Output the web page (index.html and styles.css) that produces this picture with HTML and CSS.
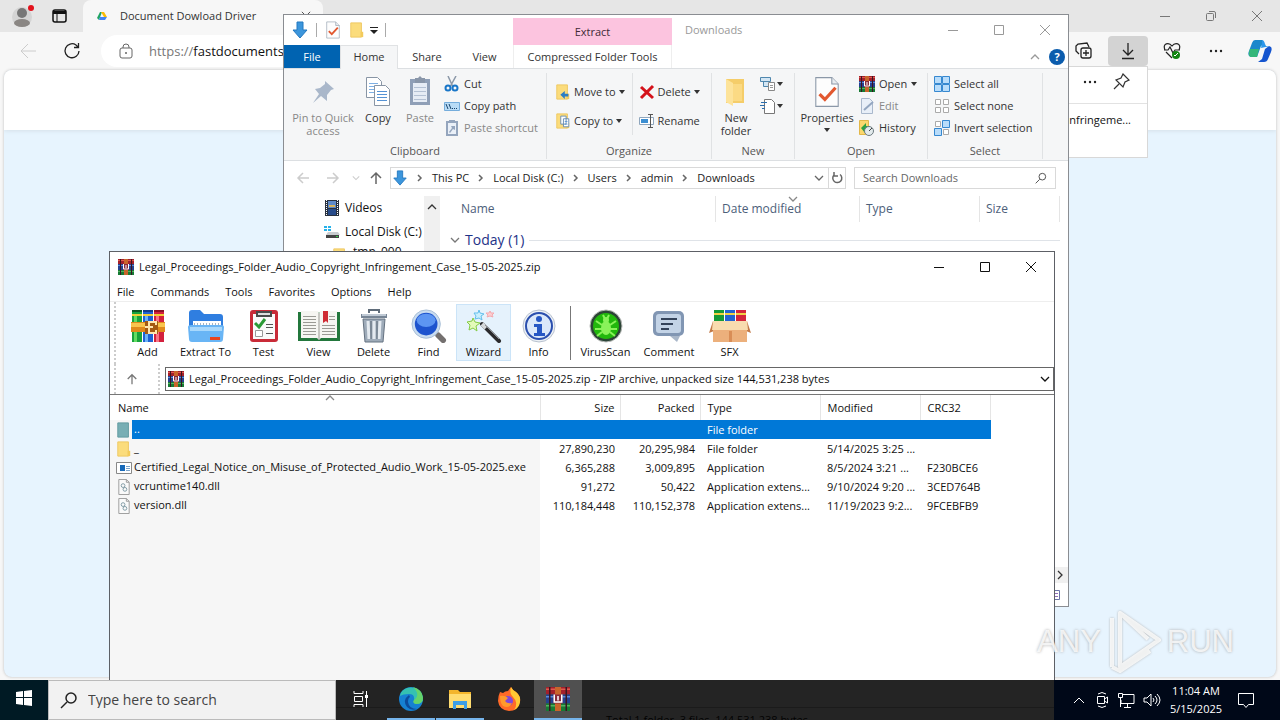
FILE: index.html
```html
<!DOCTYPE html>
<html lang="en">
<head>
    <meta charset="UTF-8">
    <meta name="viewport" content="width=device-width, initial-scale=1.0">
    <title>Desktop</title>
    <link rel="stylesheet" href="styles.css">
</head>
<body>
    <!-- Shared icons -->
    <svg class="sprite" xmlns="http://www.w3.org/2000/svg">
        <symbol id="rar" viewBox="0 0 16 16">
            <path fill="#a3202b" d="M0 0h16v5H0z"/><path fill="#e05a50" d="M0 1h16v1H0z"/>
            <path fill="#25408f" d="M0 5h16v6H0z"/><path fill="#5b8ad8" d="M0 6h16v1H0z"/>
            <path fill="#167a34" d="M0 11h16v5H0z"/><path fill="#55b060" d="M0 12h16v1H0z"/>
            <path fill="#3b1420" d="M2 0h1v5H2zM13 0h1v5h-1zM2 5h1v6H2zM13 5h1v6h-1zM2 11h1v5H2zM13 11h1v5h-1z"/>
            <path fill="#c9652b" d="M6 0h4v16H6z"/>
            <path fill="#8a2a3c" d="M5 5h6v6H5z"/><path fill="none" stroke="#fff" d="M5.500 5v5h5V5M8 6v3"/>
        </symbol>
        <symbol id="books" viewBox="0 0 34 34">
            <path fill="#18a33c" d="M1 2h10v31H1z"/><path fill="#63dc62" d="M3 5h3v28H3z"/>
            <path fill="#1c62d4" d="M12 2h10v31H12z"/><path fill="#6bb2f6" d="M14 5h3v28h-3z"/>
            <path fill="#d3203d" d="M23 2h10v31H23z"/><path fill="#f77485" d="M25 5h3v28h-3z"/>
            <path fill="#f2cf35" d="M1 5h10v2H1zM12 5h10v2H12zM23 5h10v2H23z"/>
            <path fill="#0d5524" d="M1 1h10v2H1z"/><path fill="#123c8c" d="M12 1h10v2H12z"/><path fill="#8e1226" d="M23 1h10v2H23z"/>
            <path fill="#e08a1c" d="M0 13h34v10H0z"/><path fill="#f9c54e" d="M0 14h34v4H0z"/>
            <path fill="#a45a12" d="M14 12h13v13H14z"/><path fill="none" stroke="#ffe7ae" stroke-width="2" d="M25 16v-3h-7v11h7v-3M14 18h8"/>
        </symbol>
        <symbol id="downarrow" viewBox="0 0 16 18">
            <path fill="#3c96dc" stroke="#2378c0" d="M5 1h6v8h4l-7 8-7-8h4z"/>
        </symbol>
        <symbol id="folder" viewBox="0 0 16 18">
            <path fill="#fbdc7c" stroke="#edc65c" d="M1 1h12v16H1z"/><path fill="#f3cb5c" d="M12 11h3v6h-3z"/>
        </symbol>
        <symbol id="doccheck" viewBox="0 0 24 30">
            <path fill="#fdfdfd" stroke="#8b98a8" d="M1.500 1.500h15l6 6v21h-21z"/><path fill="#e8ecf0" stroke="#8b98a8" d="M16.500 1.500v6h6"/>
            <path fill="none" stroke="#e2582f" stroke-width="3" d="M5 17l5 5 10-11"/>
        </symbol>
        <symbol id="dll" viewBox="0 0 14 17">
            <path fill="#fafafa" stroke="#9a9a9a" d="M1.500.5h8l3 3v13h-11z"/><path fill="none" stroke="#9a9a9a" d="M9.500.5v3h3"/>
            <circle cx="6" cy="7" r="2" fill="none" stroke="#7f9aa4"/><circle cx="8" cy="11" r="2" fill="none" stroke="#7f9aa4"/>
        </symbol>
        <symbol id="close" viewBox="0 0 12 12"><path fill="none" stroke="currentColor" d="M1 1l10 10M11 1L1 11"/></symbol>
        <symbol id="max" viewBox="0 0 12 12"><path fill="none" stroke="currentColor" d="M1.500 1.500h9v9h-9z"/></symbol>
        <symbol id="min" viewBox="0 0 12 12"><path fill="none" stroke="currentColor" d="M1 6.500h10"/></symbol>
        <symbol id="up" viewBox="0 0 12 14"><path fill="none" stroke="currentColor" stroke-width="1.500" d="M6 13V2M1 7l5-5 5 5"/></symbol>
        <symbol id="chev" viewBox="0 0 10 10"><path fill="none" stroke="currentColor" stroke-width="1.300" d="M1 3l4 4 4-4"/></symbol>
        <symbol id="chevr" viewBox="0 0 6 8"><path fill="none" stroke="currentColor" stroke-width="1.500" d="M1 1l3 3-3 3"/></symbol>
        <symbol id="drop" viewBox="0 0 6 4"><path fill="currentColor" d="M0 0h6L3 4z"/></symbol>
        <symbol id="lens" viewBox="0 0 18 18"><circle cx="11" cy="7" r="5" fill="none" stroke="currentColor" stroke-width="1.500"/><path stroke="currentColor" stroke-width="1.500" d="M7 11l-6 6"/></symbol>
    </svg>

    <!-- Browser -->
    <section class="browser">
        <header class="tabstrip">
            <svg class="avatar" viewBox="0 0 24 24"><circle cx="10" cy="13" r="10" fill="#d4d4d4"/><circle cx="10" cy="9" r="5" fill="#777"/><ellipse cx="10" cy="19" rx="8" ry="4" fill="#8a8683"/><circle cx="19" cy="4" r="3" fill="#e3121c"/></svg>
            <svg class="workspace" viewBox="0 0 16 16"><rect x="1" y="2" width="13" height="12" rx="2" fill="none" stroke="#111" stroke-width="1.500"/><path fill="#111" d="M1 3h13v3H1z"/><path stroke="#111" d="M5 5v9"/></svg>
            <div class="tab">
                <svg class="icon10" viewBox="0 0 10 10"><path fill="#1fa463" d="M3 1h2L2 9 0 7z"/><path fill="#fbbc04" d="M4 1h3l3 5H7z"/><path fill="#4285f4" d="M3 6h7L8 9H2z"/></svg>
                <span>Document Dowload Driver</span>
                <button class="tabclose" aria-label="Close tab"><svg class="icon10"><use href="#close"/></svg></button>
            </div>
            <div class="controls">
                <button aria-label="Minimize"><svg class="icon12"><use href="#min"/></svg></button>
                <button aria-label="Restore"><svg class="icon12" viewBox="0 0 12 12"><rect x="1.500" y="3.500" width="7" height="7" rx="1" fill="none" stroke="#777"/><path fill="none" stroke="#777" d="M4 1.500h5q1.500 0 1.500 1.500v5"/></svg></button>
                <button aria-label="Close"><svg class="icon12"><use href="#close"/></svg></button>
            </div>
        </header>
        <div class="navbar">
            <button class="back" aria-label="Back"><svg viewBox="0 0 16 16"><path fill="none" stroke="#ccc" d="M16 8H1M8 1L1 8l7 7"/></svg></button>
            <button class="reload" aria-label="Refresh"><svg viewBox="0 0 18 18"><path fill="none" stroke="#222" stroke-width="1.300" d="M16 9a7 7 0 1 1-3-6l2 2M15.500 1v4.500H11"/></svg></button>
            <div class="omnibox">
                <svg viewBox="0 0 14 16"><rect x="1" y="5" width="12" height="10" rx="2" fill="none" stroke="#666"/><path fill="none" stroke="#666" d="M4 5V4a3 3 0 0 1 6 0v1"/><circle cx="7" cy="10" r="1" fill="#666"/></svg>
                <label for="url">https://</label>
                <input type="text" id="url" value="fastdocuments">
            </div>
            <div class="tools">
                <button aria-label="Collections"><svg viewBox="0 0 18 18"><path fill="none" stroke="#222" stroke-width="1.300" d="M4 12L1 9V4l2-2 9-1 2 4"/><rect x="6" y="6" width="10" height="10" rx="2" fill="#f7f7f7" stroke="#222" stroke-width="1.300"/><path stroke="#222" stroke-width="1.300" d="M11 8v6M8 11h6"/></svg></button>
                <button class="active" aria-label="Downloads"><svg viewBox="0 0 18 18"><path fill="none" stroke="#222" stroke-width="1.300" d="M9 1v12M4 8l5 5 5-5M3 16.500h12"/></svg></button>
                <button aria-label="Browser essentials"><svg viewBox="0 0 18 18"><path fill="none" stroke="#222" stroke-width="1.200" d="M2 8C-1 1 6 0 9 4c3-4 10-3 7 4M1 8h4l2-3 3 6 2-3h5M3 10l6 6"/><circle cx="13" cy="13" r="4" fill="#128512"/><path fill="none" stroke="#fff" d="M11 13l1 1 3-3"/></svg></button>
                <button aria-label="Settings"><svg viewBox="0 0 18 18"><circle cx="4" cy="9" r="1.200" fill="#222"/><circle cx="9" cy="9" r="1.200" fill="#222"/><circle cx="14" cy="9" r="1.200" fill="#222"/></svg></button>
                <button class="copilot" aria-label="Copilot"><svg viewBox="0 0 24 24"><path fill="#1b88cc" d="M7 1h7l2 4-3 2-4 11H3Q-1 17 1 12l3-8q1-3 3-3z"/><path fill="#35b779" d="M2 10h9L9 18H4q-5 0-2-8z"/><path fill="#1555cf" d="M10 23l4-3 3-10 4-3q4 1 2 6l-3 7q-1 3-4 3z"/><path fill="#2a96ea" d="M14 1q2 0 3 4l1 2h4L13 9l1-5z"/></svg></button>
            </div>
        </div>
        <div class="webpage"><div class="banner"></div></div>
        <div class="downloads">
            <div class="downloads-head">
                <button aria-label="More options"><svg viewBox="0 0 18 18"><circle cx="4" cy="9" r="1.200" fill="#222"/><circle cx="9" cy="9" r="1.200" fill="#222"/><circle cx="14" cy="9" r="1.200" fill="#222"/></svg></button>
                <button aria-label="Pin"><svg viewBox="0 0 18 18"><path fill="none" stroke="#333" stroke-width="1.200" d="M10 1l6 6-4 2-2 5-7-7 5-2zM6 11l-5 5"/></svg></button>
            </div>
            <p>Infringeme...</p>
        </div>
    </section>

    <!-- File Explorer -->
    <section class="window explorer">
        <header class="explorer-title">
            <div class="quick">
                <svg class="icon18"><use href="#downarrow"/></svg>
                <i></i>
                <svg class="icon18"><use href="#doccheck"/></svg>
                <svg class="icon16"><use href="#folder"/></svg>
                <svg class="icon8" viewBox="0 0 8 8"><path fill="#222" d="M0 1h8v1H0zM0 4h8L4 8z"/></svg>
                <i></i>
            </div>
            <div class="extract">Extract</div>
            <span class="caption">Downloads</span>
            <div class="controls">
                <button aria-label="Minimize"><svg class="icon12"><use href="#min"/></svg></button>
                <button aria-label="Maximize"><svg class="icon12"><use href="#max"/></svg></button>
                <button aria-label="Close"><svg class="icon12"><use href="#close"/></svg></button>
            </div>
        </header>
        <nav class="ribbon-tabs">
            <button class="file">File</button>
            <button class="home">Home</button>
            <button>Share</button>
            <button class="view">View</button>
            <button class="context">Compressed Folder Tools</button>
            <svg class="icon10 collapse"><use href="#chev"/></svg>
            <button class="help" aria-label="Help">?</button>
        </nav>
        <div class="ribbon">
            <div class="group clipboard">
                <div class="group-body">
                    <button class="big dim pin"><svg viewBox="0 0 32 32"><path fill="#a9b7ca" d="M18 5l9 8-3 1-4 5v6l-6-5-8 7 6-9-4-5 5-1 5-4z"/></svg>Pin to Quick access</button>
                    <button class="big copy"><svg viewBox="0 0 32 32"><path fill="#fff" stroke="#8895a5" d="M4.500 1.500h11l4 4v16h-15z"/><path stroke="#7eb0e4" d="M7 7.500h9M7 10.500h9M7 13.500h9M7 16.500h9"/><path fill="#fff" stroke="#8895a5" d="M12.500 9.500h11l4 4v16h-15z"/><path stroke="#5592d4" d="M15 15.500h10M15 18.500h10M15 21.500h10M15 24.500h10"/></svg>Copy</button>
                    <button class="big dim paste"><svg viewBox="0 0 32 32"><path fill="#8f9fb7" d="M6 3h20v26H6z"/><path fill="#e6ecf5" d="M9 7h14v19H9z"/><path fill="#8996a9" d="M11 2h3l2-2 2 2h3v5H11z"/><path stroke="#b4c1d4" d="M10 11.500h12M10 15.500h12M10 19.500h12M10 23.500h12"/></svg>Paste</button>
                    <div class="stack">
                        <button><svg viewBox="0 0 16 16"><path stroke="#8b98a8" stroke-width="1.500" d="M4 0l5 11M12 0L6 11"/><circle cx="4" cy="12" r="2.500" fill="none" stroke="#1976c8" stroke-width="2"/><circle cx="11" cy="12" r="2.500" fill="none" stroke="#1976c8" stroke-width="2"/></svg>Cut</button>
                        <button><svg viewBox="0 0 16 16"><path fill="#b9dcf6" stroke="#75addc" d="M.5 4.500h15v8H.5z"/><path fill="none" stroke="#17446e" d="M2 6l2 5M5 6l2 5M8 10.500h1M10 10.500h1M12 10.500h1"/></svg>Copy path</button>
                        <button class="dim"><svg viewBox="0 0 16 16"><path fill="#eaf0f8" stroke="#94a5bd" stroke-width="2" d="M3 2h10v13H3z"/><path fill="#94a5bd" d="M5 0h6v3H5zM7 6h4v4L9 9l-3 4-1-1 3-4z"/></svg>Paste shortcut</button>
                    </div>
                </div>
                <h2>Clipboard</h2>
            </div>
            <div class="group organize">
                <div class="group-body">
                    <div class="stack wide">
                        <button><svg viewBox="0 0 16 18"><use href="#folder"/><path fill="#2c7dc5" d="M5 12l5-4v3h4v3h-4v3z"/></svg>Move to<svg class="drop"><use href="#drop"/></svg></button>
                        <button><svg viewBox="0 0 16 18"><use href="#folder"/><path fill="#fff" stroke="#6288b0" d="M5.500 3.500h6v9h-6zM8.500 6.500h6v9h-6z"/><path stroke="#5592d4" d="M10 9.500h3M10 12.500h3"/></svg>Copy to<svg class="drop"><use href="#drop"/></svg></button>
                    </div>
                    <div class="stack wide second">
                        <button><svg viewBox="0 0 16 16"><path stroke="#d4121a" stroke-width="3" d="M2 3l12 11M14 2L2 14"/></svg>Delete<svg class="drop"><use href="#drop"/></svg></button>
                        <button><svg viewBox="0 0 16 16"><path fill="#fff" stroke="#8fa6bd" d="M.5 4.500h14v7H.5z"/><path fill="#3d8fd2" d="M2 6h7v4H2z"/><path fill="none" stroke="#555" d="M9 1.500h5M9 14.500h5M11.500 1v14"/></svg>Rename</button>
                    </div>
                </div>
                <h2>Organize</h2>
            </div>
            <div class="group new">
                <div class="group-body">
                    <button class="big newfolder"><svg viewBox="0 0 32 32"><path fill="#f5cd69" d="M6 3h18v24H6z"/><path fill="#fde39a" d="M6 3l7 4v23l-7-4z"/><path fill="#fbda84" d="M13 8h9v17h-9z"/></svg>New folder</button>
                    <div class="stack">
                        <button aria-label="New item"><svg viewBox="0 0 16 16"><path fill="#d3e6f4" stroke="#4f87ae" d="M.5 1.500h10v4H.5zM3.500 5.500h6v5h-6z"/><path fill="#fff" stroke="#888" d="M8.500 6.500h6v8h-6z"/><path stroke="#999" d="M10 9.500h3M10 11.500h3"/></svg><svg class="drop"><use href="#drop"/></svg></button>
                        <button aria-label="Easy access"><svg viewBox="0 0 16 16"><path fill="#fff" stroke="#777" d="M4.500 1.500h7l3 3v11h-10z"/><path stroke="#2c6fae" d="M1 4.500h6M0 7.500h5M2 10.500h3"/></svg><svg class="drop"><use href="#drop"/></svg></button>
                    </div>
                </div>
                <h2>New</h2>
            </div>
            <div class="group open">
                <div class="group-body">
                    <button class="big props"><svg><use href="#doccheck"/></svg>Properties<svg class="drop"><use href="#drop"/></svg></button>
                    <div class="stack">
                        <button><svg><use href="#rar"/></svg>Open<svg class="drop"><use href="#drop"/></svg></button>
                        <button class="dim"><svg viewBox="0 0 16 16"><path fill="#e8eff8" stroke="#a9b8cc" d="M2.500.5h8l3 3v12h-11z"/><path stroke="#93a6c0" stroke-width="2" d="M5 12l9-8"/></svg>Edit</button>
                        <button><svg viewBox="0 0 16 16"><path fill="#fbd76d" stroke="#e2b748" d="M.5.5h9v14h-9z"/><path fill="#2ea043" d="M2 8l5-5v3h4v4H6v3z"/><circle cx="10" cy="11" r="4.500" fill="#e2eaec" stroke="#6d7b80"/><path fill="none" stroke="#444" d="M10 11l3-3"/></svg>History</button>
                    </div>
                </div>
                <h2>Open</h2>
            </div>
            <div class="group select">
                <div class="group-body">
                    <div class="stack">
                        <button><svg viewBox="0 0 16 16"><path fill="#b8dcfa" stroke="#3688d0" d="M.5.5h7v7h-7zM8.500.5h7v7h-7zM.5 8.500h7v7h-7zM8.500 8.500h7v7h-7z"/></svg>Select all</button>
                        <button><svg viewBox="0 0 16 16"><path fill="#fff" stroke="#aaa" d="M1.500 1.500h5v5h-5zM9.500 1.500h5v5h-5zM1.500 9.500h5v5h-5zM9.500 9.500h5v5h-5z"/></svg>Select none</button>
                        <button><svg viewBox="0 0 16 16"><path fill="#fff" stroke="#aaa" d="M1.500 1.500h5v5h-5zM9.500 9.500h5v5h-5z"/><path fill="#b8dcfa" stroke="#3688d0" d="M8.500.5h7v7h-7zM.5 8.500h7v7h-7z"/></svg>Invert selection</button>
                    </div>
                </div>
                <h2>Select</h2>
            </div>
        </div>
        <div class="pathrow">
            <div class="arrows">
                <svg class="icon14 faint" viewBox="0 0 14 14"><path fill="none" stroke="currentColor" stroke-width="1.500" d="M13 7H2M7 2L2 7l5 5"/></svg>
                <svg class="icon14 faint" viewBox="0 0 14 14"><path fill="none" stroke="currentColor" stroke-width="1.500" d="M1 7h11M7 2l5 5-5 5"/></svg>
                <svg class="icon8 faint"><use href="#chev"/></svg>
                <svg class="icon14"><use href="#up"/></svg>
            </div>
            <div class="crumbs">
                <svg class="icon16"><use href="#downarrow"/></svg>
                <svg class="sep"><use href="#chevr"/></svg><a href="#">This PC</a>
                <svg class="sep"><use href="#chevr"/></svg><a href="#">Local Disk (C:)</a>
                <svg class="sep"><use href="#chevr"/></svg><a href="#">Users</a>
                <svg class="sep"><use href="#chevr"/></svg><a href="#">admin</a>
                <svg class="sep"><use href="#chevr"/></svg><a href="#">Downloads</a>
                <svg class="icon10 history"><use href="#chev"/></svg>
                <button aria-label="Refresh"><svg class="icon12" viewBox="0 0 12 12"><path fill="none" stroke="#666" stroke-width="1.500" d="M9 2.500A4.500 4.500 0 1 1 3 3M3 0v4h4"/></svg></button>
            </div>
            <div class="search">
                <input type="text" aria-label="Search Downloads" placeholder="Search Downloads">
                <svg class="icon12"><use href="#lens"/></svg>
            </div>
        </div>
        <div class="explorer-body">
            <ul class="tree">
                <li><svg class="icon16" viewBox="0 0 16 16"><path fill="#29313f" d="M1 0h14v16H1z"/><path fill="#5f8ac8" d="M4 1h8v7H4z"/><path fill="#274b8a" d="M4 9h8v6H4z"/><path fill="#d9b45c" d="M5 5h6v2H5z"/><path stroke="#fff" stroke-dasharray="1 1" d="M2.500 0v16M13.500 0v16"/></svg>Videos</li>
                <li><svg class="icon16" viewBox="0 0 16 16"><path fill="#27b2ea" d="M0 2h3v2H0zM4 2h3v2H4zM0 5h3v2H0zM4 5h3v2H4z"/><path fill="#c9cdd0" d="M4 8h10l2 3H2z"/><path fill="#444" d="M2 11h13v3H2z"/><path fill="#35d04b" d="M12 12h2v1h-2z"/></svg>Local Disk (C:)</li>
                <li class="sub"><svg class="icon16"><use href="#folder"/></svg>tmp_000</li>
            </ul>
            <div class="vscroll"><svg class="icon10"><use href="#chev"/></svg></div>
            <div class="files">
                <div class="cols"><span>Name</span><span class="sorted">Date modified<svg class="icon10 sortmark"><use href="#chev"/></svg></span><span>Type</span><span>Size</span></div>
                <div class="today"><svg class="icon10"><use href="#chev"/></svg>Today (1)<hr></div>
            </div>
        </div>
        <div class="hscroll"><svg class="icon10"><use href="#chev"/></svg></div>
        <footer class="explorer-foot"><svg class="icon10" viewBox="0 0 10 10"><path fill="#fff" stroke="#6a74a8" d="M.5.5h9v9h-9z"/><path stroke="#9270b8" d="M2 3.500h6M2 6.500h6"/></svg></footer>
    </section>

    <!-- WinRAR -->
    <section class="window rar">
        <header class="rar-title">
            <svg class="icon16"><use href="#rar"/></svg>
            <span>Legal_Proceedings_Folder_Audio_Copyright_Infringement_Case_15-05-2025.zip</span>
            <div class="controls">
                <button aria-label="Minimize"><svg class="icon12"><use href="#min"/></svg></button>
                <button aria-label="Maximize"><svg class="icon12"><use href="#max"/></svg></button>
                <button aria-label="Close"><svg class="icon12"><use href="#close"/></svg></button>
            </div>
        </header>
        <nav class="menu">
            <button>File</button><button>Commands</button><button>Tools</button><button>Favorites</button><button>Options</button><button>Help</button>
        </nav>
        <div class="toolbar">
            <button><svg><use href="#books"/></svg>Add</button>
            <button class="w60"><svg viewBox="0 0 36 34"><path fill="#2f7ee0" d="M1 4q0-3 3-3h8l4 4h16q3 0 3 3v20H1z"/><path fill="#fff" d="M5 12h28v8H5z"/><path stroke="#a4b4c4" stroke-dasharray="1 2" stroke-width="2" d="M6 15h26"/><path fill="#69b5f5" d="M0 18q0-2 3-2h30q3 0 3 2l-1 12q0 3-3 3H4q-3 0-3-3z"/><path fill="#a8d8fc" d="M2 18h32v4H2z"/><path fill="#e8441e" d="M22 28h10v3H22z"/></svg>Extract To</button>
            <button><svg viewBox="0 0 30 34"><rect x="1" y="1" width="28" height="32" rx="3" fill="#c92b38"/><path fill="#fafafa" d="M4 5h22v25H4z"/><path fill="#ddd" stroke="#4a4a4a" stroke-width="2" d="M8 3h14v4H8z"/><path fill="none" stroke="#2c9a36" stroke-width="3" d="M6 14l4 4 6-8"/><path fill="#fff" stroke="#999" d="M6.500 21.500h7v6h-7z"/><path stroke="#555" d="M17 15.500h7M17 18.500h7M17 24.500h7"/></svg>Test</button>
            <button><svg class="book" viewBox="0 0 42 34"><path fill="#23773c" d="M0 3h42v29H0z"/><path fill="#f6f6f2" d="M3 2h17l1 2 1-2h17v27H23l-2 2-2-2H3z"/><path stroke="#9a9a94" d="M21 4v27M5 7.500h13M5 10.500h13M5 13.500h13M5 16.500h13M5 19.500h13M5 22.500h13M5 25.500h13M24 16.500h13M24 19.500h13M24 22.500h13M24 25.500h13M31 7.500h6M31 10.500h6"/><path fill="#cf2c34" d="M25 2h5v12l-2-2-3 2z"/></svg>View</button>
            <button><svg viewBox="0 0 30 34"><path fill="#778595" d="M2 5h26v4H2z"/><path fill="#c0cad5" d="M3 5h24v2H3z"/><path fill="none" stroke="#5f6c7a" stroke-width="2" d="M10 4V1h10v3"/><path fill="#9eabb9" stroke="#657281" d="M4 10h22l-2 23H6z"/><path stroke="#e4eaf0" stroke-width="3" d="M9 12l1 18M15 12v18M21 12l-1 18"/><path stroke="#586674" d="M12 12v18M18 12v18"/></svg>Delete</button>
            <button><svg viewBox="0 0 38 36"><path stroke="#b9bfc5" stroke-width="6" d="M25 24l4 4"/><path stroke="#74706f" stroke-width="6" stroke-linecap="round" d="M29 28l5 5"/><circle cx="16" cy="16" r="15" fill="#c9dcf0" stroke="#a6bcd4"/><circle cx="16" cy="16" r="12" fill="#1d53ce"/><ellipse cx="16" cy="12" rx="10" ry="7" fill="#5c95f2"/></svg>Find</button>
            <button class="hover"><svg viewBox="0 0 36 34"><path stroke="#2a2a2c" stroke-width="4" stroke-linecap="round" d="M16 15l17 17"/><path stroke="#d5d8da" stroke-width="4" d="M16 15l4 4"/><path stroke="#8c8f93" d="M19 16l14 14"/><path fill="#e3fab9" stroke="#84cc46" d="M7 9l2 4 5 1-4 3 1 5-4-3-4 2 1-5-3-3 5-1z"/><path fill="#c9effd" stroke="#64bfec" d="M13 1l1 3 4 1-3 2 1 4-3-2-4 1 1-3-2-3h4z"/><path fill="#fbcdd0" stroke="#f4a9ae" d="M24 2l1 2h3l-2 2 1 2-3-1-3 1 1-2-2-2h3z"/></svg>Wizard</button>
            <button><svg viewBox="0 0 34 34"><circle cx="17" cy="17" r="16" fill="#edf1f6" stroke="#b9c2cf"/><circle cx="17" cy="17" r="13" fill="#dbe8fa" stroke="#2b4fae" stroke-width="2"/><circle cx="17" cy="10" r="3" fill="#2657c4"/><path fill="#2657c4" d="M12 15h8v9h3v3H12v-3h3v-6h-3z"/></svg>Info</button>
            <i></i>
            <button class="w60"><svg viewBox="0 0 34 34"><circle cx="17" cy="17" r="16" fill="#2c4436" stroke="#b8bab8"/><circle cx="17" cy="17" r="13" fill="#22b80d"/><ellipse cx="17" cy="19" rx="5" ry="7" fill="#8af35a"/><circle cx="17" cy="11" r="3" fill="#8af35a"/><path fill="none" stroke="#8af35a" stroke-width="2" d="M7 12l6 4M27 12l-6 4M6 20h22M8 27l5-4M26 27l-5-4M14 6l2 4M20 6l-2 4"/></svg>VirusScan</button>
            <button class="w66"><svg viewBox="0 0 34 34"><rect x="1" y="2" width="31" height="25" rx="5" fill="#8196b3"/><rect x="4" y="5" width="25" height="19" rx="3" fill="#c3d3e6"/><path fill="#a9b7c9" d="M18 27h10l-3 6z"/><path stroke="#34435a" stroke-width="2" d="M9 10h16M9 15h12M9 20h8"/></svg>Comment</button>
            <button><svg class="book" viewBox="0 0 42 34"><path fill="#159a36" d="M5 1h10v14H5z"/><path fill="#2264d2" d="M16 1h10v14H16z"/><path fill="#d5263b" d="M27 1h10v14H27z"/><path fill="#f0d144" d="M5 4h10v2H5zM16 4h10v2H16zM27 4h10v2H27z"/><path fill="#c27a48" d="M4 12L0 24l5-2zM38 12l4 12-5-2z"/><path fill="#ecb07c" d="M4 12h34v21H4z"/><path fill="#f8dcaf" d="M4 12h34l1 9H3z"/><path fill="#d98d56" d="M20 22h3v11h-3z"/></svg>SFX</button>
        </div>
        <div class="rar-path">
            <button class="upbtn" aria-label="Up one level"><svg class="icon12"><use href="#up"/></svg></button>
            <div class="rar-address">
                <svg class="icon16"><use href="#rar"/></svg>
                <input type="text" aria-label="Archive path" value="Legal_Proceedings_Folder_Audio_Copyright_Infringement_Case_15-05-2025.zip - ZIP archive, unpacked size 144,531,238 bytes">
                <svg class="icon10"><use href="#chev"/></svg>
            </div>
        </div>
        <div class="list">
            <table>
                <thead>
                    <tr><th class="name">Name<svg class="icon10 sortmark"><use href="#chev"/></svg></th><th class="num">Size</th><th class="num">Packed</th><th class="type">Type</th><th class="date">Modified</th><th class="crc">CRC32</th></tr>
                </thead>
                <tbody>
                    <tr class="selected"><td><svg class="icon16" viewBox="0 0 16 18"><path fill="#78aeb4" stroke="#5d979d" d="M1 1h12v16H1z"/></svg>..</td><td></td><td></td><td>File folder</td><td></td><td></td></tr>
                    <tr><td><svg class="icon16"><use href="#folder"/></svg>_</td><td class="num">27,890,230</td><td class="num">20,295,984</td><td>File folder</td><td>5/14/2025 3:25 ...</td><td></td></tr>
                    <tr><td><svg class="icon16" viewBox="0 0 16 16"><path fill="#fff" stroke="#888" d="M.5 2.500h15v11H.5z"/><path fill="#1668b8" d="M4 5h5v6H4z"/><path stroke="#7aa4cc" d="M10 6.500h4M10 8.500h4M10 10.500h4"/></svg>Certified_Legal_Notice_on_Misuse_of_Protected_Audio_Work_15-05-2025.exe</td><td class="num">6,365,288</td><td class="num">3,009,895</td><td>Application</td><td>8/5/2024 3:21 ...</td><td>F230BCE6</td></tr>
                    <tr><td><svg class="icon16"><use href="#dll"/></svg>vcruntime140.dll</td><td class="num">91,272</td><td class="num">50,422</td><td>Application extens...</td><td>9/10/2024 9:20 ...</td><td>3CED764B</td></tr>
                    <tr><td><svg class="icon16"><use href="#dll"/></svg>version.dll</td><td class="num">110,184,448</td><td class="num">110,152,378</td><td>Application extens...</td><td>11/19/2023 9:2...</td><td>9FCEBFB9</td></tr>
                </tbody>
            </table>
        </div>
        <footer class="rar-status">Total 1 folder, 3 files, 144,531,238 bytes</footer>
    </section>

    <!-- Watermark -->
    <div class="watermark">
        <span>ANY</span>
        <svg viewBox="0 0 56 64"><path d="M14 3v54l39-27zM6 8v49M14 3l28 26M6 57l8 4 30-20"/></svg>
        <span>RUN</span>
    </div>

    <!-- Taskbar -->
    <footer class="taskbar">
        <button class="start" aria-label="Start"><svg class="icon16" viewBox="0 0 16 16"><path fill="#fff" d="M0 2l7-1v6H0zM8 1l8-1v7H8zM0 8h7v7l-7-1zM8 8h8v8l-8-1z"/></svg></button>
        <div class="tasksearch">
            <svg class="icon18"><use href="#lens"/></svg>
            <input type="text" aria-label="Search" placeholder="Type here to search">
        </div>
        <div class="apps">
            <button class="taskview" aria-label="Task view"><svg viewBox="0 0 18 18"><path fill="none" stroke="#fff" d="M2 1v2.500h9V1M2 17v-2.500h9V17M2.500 6.500h8v5h-8zM14.500 1v16"/><path fill="#fff" d="M13 5h3v3h-3z"/></svg></button>
            <button class="running" aria-label="Edge"><svg viewBox="0 0 24 24"><circle cx="12" cy="12" r="12" fill="#1681d2"/><path fill="#35c1b1" d="M1 9C3-2 21-3 24 11q0 6-7 6-4-1-2-4 1-6-5-6-6 0-9 2z"/><path fill="#65d36a" d="M14 0q9 2 10 11 0 6-7 6-4-1-2-4 7-5-1-13z"/><path fill="#0c4c9c" d="M10 8q-7 5-2 12 4 4 10 2-8 0-9-7 0-4 2-5z"/></svg></button>
            <button class="running" aria-label="File Explorer"><svg viewBox="0 0 24 24"><path fill="#f3b52c" d="M1 3h9l2 2h11v16H1z"/><path fill="#ffdc70" d="M1 7h22v14H1z"/><path fill="#3d9ee5" d="M5 14h14v8h-3v-4H8v4H5z"/></svg></button>
            <button aria-label="Firefox"><svg viewBox="0 0 24 24"><path fill="#ff6a28" d="M3 5l3 1q2-2 5-2l3-4q2 4 5 5 5 4 4 10-2 9-11 9-10-1-11-10 0-5 2-9z"/><path fill="#ffc933" d="M14 0q2 4 5 5 5 4 4 10-1 6-6 8 5-7-1-13-4-4-2-10z"/><circle cx="11" cy="14" r="5" fill="#8049d8"/><path fill="#ff9a2c" d="M3 9q5-1 8 2l-3 3q2 3 7 2-3 6-9 3-3-3-3-10z"/></svg></button>
            <button class="running current" aria-label="WinRAR"><svg><use href="#rar"/></svg></button>
        </div>
        <div class="tray">
            <svg class="icon12" viewBox="0 0 12 12"><path fill="none" stroke="#fff" d="M1 9l5-5 5 5"/></svg>
            <svg class="icon16" viewBox="0 0 16 16"><path fill="none" stroke="#fff" d="M4.500 4.500h7v7h-7zM11.500 7l3-2v6l-3-2M5 2q4-3 8 0M5 14q4 3 8 0"/></svg>
            <svg class="icon18" viewBox="0 0 18 18"><path fill="none" stroke="#fff" d="M6 3.500h11v9H4V9M10.500 13v3M7 16.500h7M1.500 2.500h4v4h-4zM3.500 7v9"/></svg>
            <svg class="icon18" viewBox="0 0 18 18"><path fill="none" stroke="#fff" d="M1 7h3l4-4v12l-4-4H1zM10 7q2 2 0 4M12 5q4 4 0 8M14 3q6 6 0 12"/></svg>
            <div class="clock"><span>11:04 AM</span><span>5/15/2025</span></div>
            <svg class="icon18" viewBox="0 0 18 18"><path fill="none" stroke="#fff" d="M1.500 2.500h15v11h-5L9 16.500l-2.500-3h-5z"/></svg>
        </div>
    </footer>
</body>
</html>
```
FILE: styles.css
```css
* {
    box-sizing: border-box;
}
body {
    margin: 0;
    position: relative;
    height: 100vh;
    overflow: hidden;
    background: #f7f7f7;
    color: #111;
    font: 11px/16px "Open Sans", "Noto Sans", sans-serif;
}
button, input {
    font: inherit;
    color: inherit;
    background: none;
    border: none;
    padding: 0;
    margin: 0;
    min-width: 0;
    outline: none;
}
button {
    cursor: pointer;
}
svg {
    flex: none;
}
.sprite {
    position: absolute;
    width: 0;
    height: 0;
}
.icon8 { width: 8px; height: 8px; }
.icon10 { width: 10px; height: 10px; }
.icon12 { width: 12px; height: 12px; }
.icon14 { width: 14px; height: 14px; }
.icon16 { width: 16px; height: 16px; }
.icon18 { width: 18px; height: 18px; }
.controls {
    display: flex;
    margin-left: auto;
    align-self: stretch;
}
.controls button {
    width: 46px;
    display: flex;
    align-items: center;
    justify-content: center;
}

/* browser */
.browser {
    position: absolute;
    inset: 0 0 40px;
    display: flex;
    flex-direction: column;
    background: #f7f7f7;
}
.tabstrip {
    display: flex;
    align-items: center;
    height: 32px;
    background: #e6e6e6;
    color: #777;
}
.avatar {
    width: 24px;
    height: 24px;
    margin: 0 16px 0 12px;
}
.workspace {
    width: 16px;
    height: 16px;
    margin-right: 15px;
}
.tab {
    display: flex;
    align-items: center;
    gap: 13px;
    align-self: stretch;
    width: 240px;
    padding: 0 12px 0 14px;
    background: #f7f7f7;
    border-radius: 8px 8px 0 0;
    color: #333;
}
.tabclose {
    margin-left: auto;
    display: flex;
}
.navbar {
    display: flex;
    align-items: center;
    height: 38px;
}
.navbar button {
    display: flex;
    align-items: center;
    justify-content: center;
}
.back svg {
    width: 16px;
    height: 16px;
}
.back {
    margin-left: 20px;
}
.reload {
    margin: 0 20px 0 27px;
}
.reload svg, .tools svg, .downloads svg {
    width: 18px;
    height: 18px;
}
.omnibox {
    flex: 1;
    display: flex;
    align-items: center;
    height: 32px;
    padding-left: 18px;
    background: #fff;
    border-radius: 16px;
    font-size: 13px;
}
.omnibox svg {
    width: 14px;
    height: 16px;
    margin-right: 16px;
}
.omnibox label {
    color: #777;
}
.omnibox input {
    flex: 1;
}
.tools {
    display: flex;
    gap: 4px;
}
.tools button {
    width: 40px;
    height: 30px;
    border-radius: 4px;
}
.tools .active {
    background: #d3d3d3;
}
.tools .copilot svg {
    width: 24px;
    height: 24px;
}
.webpage {
    flex: 1;
    margin: 0 4px 3px;
    border-radius: 8px;
    overflow: hidden;
    background: #e7f4fe;
    box-shadow: 0 0 3px #bbb;
}
.banner {
    height: 60px;
    background: #fff;
    box-shadow: 0 1px 4px #d5e0e8;
}
.downloads {
    position: absolute;
    top: 66px;
    right: 132px;
    width: 360px;
    height: 92px;
    background: #fff;
    border: 1px solid #d8d8d8;
    text-align: right;
}
.downloads-head {
    display: flex;
    justify-content: flex-end;
    gap: 14px;
    padding: 6px 16px 12px;
    border-bottom: 1px solid #e2e2e2;
}
.downloads-head button {
    display: flex;
}
.downloads p {
    margin: 8px 16px;
}

/* windows */
.window {
    position: absolute;
    display: flex;
    flex-direction: column;
    background: #fff;
    border: 1px solid #8a8d92;
}
.explorer {
    left: 283px;
    right: 211px;
    top: 14px;
    bottom: 113px;
    color: #333;
}
.explorer-title {
    display: flex;
    align-items: center;
    height: 30px;
    color: #999;
}
.quick {
    display: flex;
    align-items: center;
    gap: 7px;
    width: 229px;
    padding-left: 7px;
    color: #222;
}
.quick i {
    width: 1px;
    height: 14px;
    background: #aaa;
}
.quick .icon8 {
    margin-left: -2px;
}
.extract {
    align-self: flex-end;
    width: 159px;
    height: 27px;
    line-height: 27px;
    text-align: center;
    background: #fcc4df;
    color: #412a36;
}
.caption {
    margin-left: 13px;
}
.explorer .controls button {
    width: 46px;
}
.ribbon-tabs {
    display: flex;
    align-items: center;
    height: 23px;
    color: #333;
}
.ribbon-tabs button {
    width: 58px;
    height: 23px;
}
.ribbon-tabs .file {
    width: 56px;
    background: #0063b1;
    color: #fff;
}
.ribbon-tabs .home {
    height: 24px;
    background: #f5f6f7;
    border: 1px solid #e0e2e4;
    border-bottom: none;
    z-index: 1;
}
.ribbon-tabs .view {
    width: 57px;
}
.ribbon-tabs .context {
    width: 159px;
    border: 1px solid #eee;
    border-width: 0 1px;
}
.collapse {
    margin-left: auto;
    transform: rotate(180deg);
    color: #999;
}
.ribbon-tabs .help {
    width: 16px;
    height: 16px;
    margin: 0 3px 0 9px;
    border-radius: 8px;
    background: #0b5cad;
    color: #fff;
    font-weight: bold;
    line-height: 16px;
}
.ribbon {
    display: flex;
    height: 93px;
    padding: 4px 0 1px;
    background: #f5f6f7;
    border: 1px solid #dcdfe2;
    border-width: 1px 0;
}
.group {
    display: flex;
    flex-direction: column;
    border-right: 1px solid #e0e2e4;
}
.group h2 {
    margin: auto 0 0;
    font-size: 11px;
    line-height: 16px;
    font-weight: normal;
    text-align: center;
    color: #555;
}
.clipboard { width: 263px; }
.organize { width: 165px; }
.new { width: 83px; }
.open { width: 133px; }
.select { width: 115px; }
.group-body {
    display: flex;
    padding-left: 4px;
}
.big {
    display: flex;
    flex-direction: column;
    align-items: center;
    width: 44px;
    line-height: 13px;
}
.big svg:first-child {
    width: 32px;
    height: 32px;
    margin: 3px 0;
}
.pin { width: 70px; }
.copy { width: 40px; }
.newfolder { width: 40px; }
.props { width: 56px; }
.props .drop {
    margin-top: 4px;
}
.dim {
    color: #888;
}
.drop {
    width: 6px;
    height: 4px;
}
.stack {
    display: flex;
    flex-direction: column;
    padding-left: 2px;
}
.stack button {
    display: flex;
    align-items: center;
    gap: 4px;
    height: 22px;
    white-space: nowrap;
}
.stack svg:first-child {
    width: 16px;
    height: 16px;
}
.wide {
    padding: 4px 7px 0 4px;
}
.wide button {
    gap: 3px;
    height: 29px;
}
.second {
    border-left: 1px solid #e0e2e4;
    padding-left: 6px;
}
.new .stack, .open .stack {
    padding-left: 4px;
}
.new .stack button {
    gap: 1px;
}
.pathrow {
    display: flex;
    align-items: center;
    height: 34px;
    padding-right: 12px;
    color: #222;
}
.arrows {
    display: flex;
    align-items: center;
    gap: 16px;
    width: 106px;
    padding-left: 12px;
    color: #666;
}
.arrows .icon8 {
    margin: 0 -7px 0 -4px;
}
.arrows .faint {
    color: #ccc;
}
.crumbs {
    flex: 1;
    display: flex;
    align-items: center;
    height: 22px;
    padding-left: 1px;
    border: 1px solid #d9d9d9;
}
.crumbs a {
    color: #222;
    text-decoration: none;
}
.sep {
    width: 6px;
    height: 8px;
    margin: 0 9px;
    color: #666;
}
.history {
    margin-left: auto;
    margin-right: 4px;
    color: #666;
}
.crumbs button {
    display: flex;
    align-items: center;
    justify-content: center;
    width: 17px;
    height: 20px;
    border-left: 1px solid #d9d9d9;
}
.search {
    display: flex;
    align-items: center;
    width: 202px;
    height: 22px;
    margin-left: 8px;
    padding: 0 8px;
    border: 1px solid #d9d9d9;
}
.search input {
    flex: 1;
}
.search svg {
    color: #555;
}
.search input::placeholder {
    color: #666;
}
.explorer-body {
    flex: 1;
    display: flex;
    min-height: 0;
    padding-top: 1px;
}
.tree {
    list-style: none;
    width: 140px;
    margin: 0;
    padding: 0 0 0 40px;
    font-size: 12px;
    color: #111;
}
.tree li {
    display: flex;
    align-items: center;
    gap: 5px;
    height: 24px;
    white-space: nowrap;
}
.tree .sub {
    padding-left: 8px;
    align-items: flex-start;
}
.sub svg {
    align-self: center;
}
.vscroll {
    width: 16px;
    padding: 4px 3px;
    background: #f0f0f0;
}
.vscroll svg {
    transform: rotate(180deg);
}
.files {
    flex: 1;
    padding: 0 8px 0 7px;
}
.cols {
    display: grid;
    grid-template-columns: 269px 144px 120px 1fr;
    height: 26px;
    color: #4c607a;
    font-size: 12px;
    line-height: 26px;
}
.cols span {
    position: relative;
    padding-left: 6px;
    border-right: 1px solid #e5e5e5;
}
.cols span:first-child {
    padding-left: 14px;
}
.today {
    display: flex;
    align-items: center;
    gap: 5px;
    height: 36px;
    padding-left: 3px;
    color: #1e3287;
    font-size: 14px;
}
.today svg {
    color: #777;
}
.today hr {
    flex: 1;
    border: none;
    border-top: 1px solid #dfe3e8;
}
.hscroll {
    height: 16px;
    padding: 3px;
    text-align: right;
    line-height: 10px;
    background: #f0f0f0;
}
.hscroll svg {
    transform: rotate(-90deg);
}
.explorer-foot {
    display: flex;
    align-items: center;
    justify-content: flex-end;
    height: 23px;
    padding-right: 8px;
}

/* archive window */
.rar {
    left: 109px;
    right: 225px;
    top: 251px;
    bottom: -10px;
    border-color: #5d6066;
}
.rar-title {
    display: flex;
    align-items: center;
    gap: 5px;
    height: 30px;
    padding-left: 8px;
}
.menu {
    display: flex;
    gap: 16px;
    height: 20px;
    padding-left: 7px;
    border-bottom: 1px solid #eee;
}
.toolbar {
    display: flex;
    height: 62px;
    margin-left: 4px;
    padding: 2px 0 3px 4px;
    border-left: 2px dotted #ccc;
}
.toolbar button {
    display: flex;
    flex-direction: column;
    align-items: center;
    justify-content: space-between;
    width: 55px;
    padding: 4px 0 0;
    border: 1px solid transparent;
}
.toolbar svg {
    width: 36px;
    height: 34px;
}
.toolbar .book {
    width: 42px;
}
.toolbar .w60 { width: 61px; }
.toolbar .w66 { width: 66px; }
.toolbar .hover {
    background: #e5f2fc;
    border-color: #cbe4f8;
}
.toolbar i {
    width: 1px;
    height: 54px;
    margin: 2px 4px;
    background: #777;
}
.rar-path {
    display: flex;
    align-items: center;
    height: 30px;
    margin-left: 4px;
    border-left: 2px dotted #ccc;
}
.upbtn {
    display: flex;
    align-items: center;
    width: 44px;
    height: 30px;
    padding-left: 10px;
    border-right: 2px dotted #ccc;
    color: #777;
}
.rar-address {
    flex: 1;
    display: flex;
    align-items: center;
    height: 24px;
    margin-left: 5px;
    padding: 0 3px 0 2px;
    border: 1px solid #666;
}
.rar-address input {
    flex: 1;
    margin-left: 5px;
}
.list {
    flex: 1;
    border-top: 1px solid #777;
    background: linear-gradient(to right, #f6f6f6 430px, #fff 430px);
}
table {
    table-layout: fixed;
    width: 881px;
    border-collapse: collapse;
}
th {
    position: relative;
    height: 25px;
    padding: 0 7px;
    border-right: 1px solid #e5e5e5;
    background: #fff;
    font-weight: normal;
    text-align: left;
}
th.name {
    width: 430px;
    padding-left: 8px;
}
.sortmark {
    position: absolute;
    top: -2px;
    left: 50%;
    color: #888;
}
th .sortmark {
    transform: rotate(180deg);
}
.num {
    width: 80px;
    padding-right: 5px;
    text-align: right;
}
.type { width: 120px; }
.date { width: 100px; }
td {
    height: 19px;
    padding: 0 7px;
    white-space: nowrap;
}
td.num {
    padding-right: 5px;
}
td:first-child {
    padding: 0 0 0 6px;
}
td svg {
    margin-right: 2px;
    vertical-align: middle;
}
.selected {
    color: #fff;
    background: #0078d7;
}
.selected td:first-child {
    background: linear-gradient(to right, #f6f6f6 22px, #0078d7 22px);
}
.rar-status {
    height: 22px;
    border-top: 1px solid #bbb;
    line-height: 24px;
    text-align: center;
    padding-left: 250px;
}

.watermark {
    position: absolute;
    right: 46px;
    bottom: 46px;
    display: flex;
    align-items: center;
    gap: 4px;
    color: rgba(255, 255, 255, 0.8);
    font: 31px/64px "Liberation Sans", sans-serif;
    text-shadow: 0 0 3px #aaa;
}
.watermark svg {
    width: 58px;
    height: 64px;
    fill: none;
    stroke: rgba(255, 255, 255, 0.8);
    stroke-width: 4px;
    stroke-linejoin: round;
    filter: drop-shadow(0 0 1px #aaa);
}

/* taskbar */
.taskbar {
    position: absolute;
    left: 0;
    right: 0;
    bottom: 0;
    display: flex;
    height: 40px;
    background: rgba(0, 0, 0, 0.86);
    color: #fff;
}
.start {
    width: 48px;
    background: #001a24;
}
.tasksearch {
    display: flex;
    align-items: center;
    gap: 10px;
    width: 288px;
    padding-left: 11px;
    background: #f2f2f2;
    border: 1px solid #bbb;
    color: #222;
    font-size: 14px;
}
.tasksearch input {
    flex: 1;
}
.tasksearch input::placeholder {
    color: #444;
}
.apps {
    display: flex;
    gap: 1px;
}
.apps button {
    display: flex;
    align-items: center;
    justify-content: center;
    width: 48px;
    border-bottom: 2px solid transparent;
}
.apps svg {
    width: 24px;
    height: 24px;
}
.apps .taskview {
    width: 50px;
}
.taskview svg {
    width: 18px;
    height: 18px;
}
.apps .running {
    border-color: #76b5ec;
}
.apps .current {
    background-color: #505050;
}
.tray {
    display: flex;
    align-items: center;
    gap: 8px;
    width: 226px;
    margin-left: auto;
    padding-left: 19px;
    background: #000818;
}
.clock {
    display: flex;
    flex-direction: column;
    width: 54px;
    text-align: center;
    line-height: 18px;
}
.clock + svg {
    margin-left: 6px;
}
```
